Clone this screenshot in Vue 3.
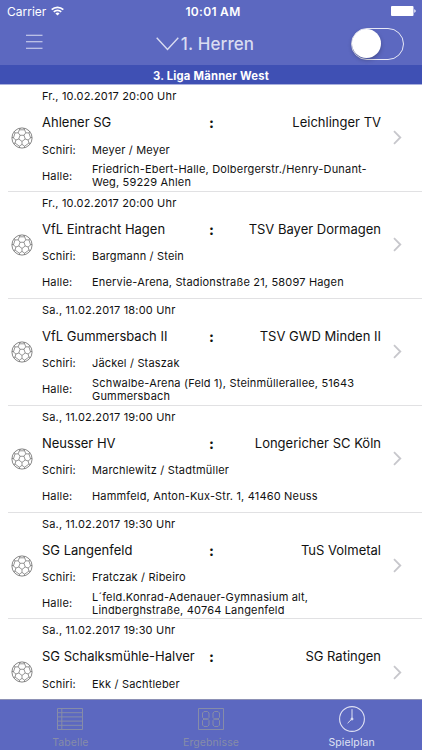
<script setup>
const games = [
  { date: 'Fr., 10.02.2017 20:00 Uhr', home: 'Ahlener SG', guest: 'Leichlinger TV', referees: 'Meyer / Meyer', hall: ['Friedrich-Ebert-Halle, Dolbergerstr./Henry-Dunant-', 'Weg, 59229 Ahlen'] },
  { date: 'Fr., 10.02.2017 20:00 Uhr', home: 'VfL Eintracht Hagen', guest: 'TSV Bayer Dormagen', referees: 'Bargmann / Stein', hall: ['Enervie-Arena, Stadionstraße 21, 58097 Hagen'] },
  { date: 'Sa., 11.02.2017 18:00 Uhr', home: 'VfL Gummersbach II', guest: 'TSV GWD Minden II', referees: 'Jäckel / Staszak', hall: ['Schwalbe-Arena (Feld 1), Steinmüllerallee, 51643', 'Gummersbach'] },
  { date: 'Sa., 11.02.2017 19:00 Uhr', home: 'Neusser HV', guest: 'Longericher SC Köln', referees: 'Marchlewitz / Stadtmüller', hall: ['Hammfeld, Anton-Kux-Str. 1, 41460 Neuss'] },
  { date: 'Sa., 11.02.2017 19:30 Uhr', home: 'SG Langenfeld', guest: 'TuS Volmetal', referees: 'Fratczak / Ribeiro', hall: ['L´feld.Konrad-Adenauer-Gymnasium alt,', 'Lindberghstraße, 40764 Langenfeld'] },
  { date: 'Sa., 11.02.2017 19:30 Uhr', home: 'SG Schalksmühle-Halver', guest: 'SG Ratingen', referees: 'Ekk / Sachtleber', hall: [] },
]
</script>

<template>
  <div class="screen">
    <header class="top">
      <div class="status">
        <div class="carrier">
          <span>Carrier</span>
          <svg width="13" height="10" viewBox="0 0 13 10" fill="none" stroke="#fff" stroke-width="1.7">
            <path d="M.7 3.7a8.2 8.2 0 0 1 11.6 0M2.8 5.9a5.2 5.2 0 0 1 7.4 0" />
            <path d="M6.5 9.6 4.4 7.5a3 3 0 0 1 4.2 0Z" fill="#fff" stroke="none" />
          </svg>
        </div>
        <span class="time">10:01 AM</span>
        <svg class="battery" width="25" height="10" viewBox="0 0 25 10" fill="#fff">
          <rect width="22.5" height="10" rx="1" />
          <path d="M23.3 3.2c1.8.4 1.8 3.2 0 3.6Z" />
        </svg>
      </div>
      <div class="nav">
        <svg class="menu" width="17" height="16" viewBox="0 0 17 16" stroke="#d9dcf1" stroke-width="1.1">
          <path d="M0 1.2h16.5M0 7.8h16.5M0 14.3h16.5" />
        </svg>
        <div class="title">
          <svg width="23" height="14" viewBox="0 0 23 14" fill="none" stroke="#d9dcf1" stroke-width="1.4">
            <path d="m.7.8 10.8 11.6L22.3.8" />
          </svg>
          <span>1. Herren</span>
        </div>
        <div class="toggle"><i class="knob"></i></div>
      </div>
    </header>
    <div class="league">3. Liga Männer West</div>
    <main class="list">
      <article v-for="(g, i) in games" :key="i" class="game">
        <svg class="ball" width="22" height="22" viewBox="-11 -11 22 22" fill="none" stroke="#6a6a6a" stroke-width=".7" stroke-linejoin="round">
          <circle r="10.1" stroke-width=".8" />
          <path d="M0 3.4-3.23 1.05-2-2.75H2L3.23 1.05Z" />
          <path d="M0 3.4v3M-3.23 1.05l-2.86.93M-2-2.75l-1.76-2.43M2-2.75l1.76-2.43M3.23 1.05l2.86.93" />
          <path d="M0 6.4-2.66 8.18-6.96 5.05-6.09 1.98-8.6 0-6.96-5.05-3.76-5.18-2.66-8.18H2.66L3.76-5.18 6.96-5.05 8.6 0 6.09 1.98 6.96 5.05 2.66 8.18Z" />
          <path d="M-2.66 8.18-2.3 9.8M2.66 8.18 2.3 9.8M-6.96 5.05l-1.5.5M6.96 5.05l1.5.5M-8.6 0-10-.8M8.6 0 10-.8M-6.96-5.05l-.9-1.3M6.96-5.05l.9-1.3M-2.66-8.18l1-1.7M2.66-8.18l-1-1.7" />
        </svg>
        <div class="body">
          <div class="date">{{ g.date }}</div>
          <div class="teams">
            <span class="home">{{ g.home }}</span>
            <b class="colon">:</b>
            <span class="guest">{{ g.guest }}</span>
          </div>
          <div class="info"><span>Schiri:</span><span>{{ g.referees }}</span></div>
          <div v-if="g.hall.length" class="info">
            <span>Halle:</span>
            <div><div v-for="line in g.hall" :key="line">{{ line }}</div></div>
          </div>
        </div>
        <svg class="chevron" width="9" height="15" viewBox="0 0 9 15" fill="none" stroke="#c7c7cc" stroke-width="1.8">
          <path d="m1 1.2 6.3 6.3L1 13.8" />
        </svg>
      </article>
    </main>
    <nav class="tabs">
      <div class="tab">
        <svg width="26" height="26" viewBox="0 0 26 26" fill="none" stroke="currentColor">
          <path d="M.5 2.5h25v21H.5ZM4.8 2.5v21M.5 6.7h25M.5 10.9h25M.5 15.1h25M.5 19.3h25" />
        </svg>
        <span>Tabelle</span>
      </div>
      <div class="tab">
        <svg width="26" height="26" viewBox="0 0 26 26" fill="none" stroke="currentColor">
          <path d="M.5 2.5h25v21H.5Z" />
          <path d="M6 5.5h3.5l1.5 1.5v4.5L9.5 13H6l-1.5-1.5V7ZM6 13h3.5l1.5 1.5V19l-1.5 1.5H6L4.5 19v-4.5ZM16.5 5.5H20L21.500 7v4.500L20 13h-3.500L15 11.500V7ZM16.500 13H20l1.500 1.500V19L20 20.500h-3.500L15 19v-4.500Z" />
        </svg>
        <span>Ergebnisse</span>
      </div>
      <div class="tab active">
        <svg width="26" height="26" viewBox="0 0 26 26" fill="none" stroke="currentColor">
          <circle cx="13" cy="13" r="12.4" stroke-width="1.1" />
          <path d="M13 3.2v9.6l-4.4 4.4" />
          <circle cx="13" cy="13" r="1" fill="currentColor" />
        </svg>
        <span>Spielplan</span>
      </div>
    </nav>
  </div>
</template>

<style>
body { background: #fff; }
</style>

<style scoped>
.screen {
  width: 422px;
  height: 750px;
  display: flex;
  flex-direction: column;
  overflow: hidden;
  background: #fff;
  color: #111;
  font-family: Inter, "Liberation Sans", sans-serif;
}
.top { height: 65px; flex: none; background: #5c68c0; color: #fff; }
.status {
  height: 22px;
  display: grid;
  grid-template-columns: 1fr auto 1fr;
  align-items: center;
  padding: 0 6px 0 8px;
  font-size: 12px;
}
.carrier { display: flex; align-items: center; gap: 5px; margin-left: -1px; letter-spacing: 0; }
.time { font-weight: 600; letter-spacing: .3px; padding-left: 2px; }
.battery { justify-self: end; }
.nav {
  height: 43px;
  display: grid;
  grid-template-columns: 1fr auto 1fr;
  align-items: center;
  padding: 0 18px 0 6px;
}
.menu { margin: -4px 0 0 20px; }
.title {
  display: flex;
  align-items: center;
  gap: 2px;
  color: #d9dcf1;
  font-size: 17px;
  font-weight: 500;
  letter-spacing: .1px;
  line-height: 22px;
}
.toggle {
  justify-self: end;
  box-sizing: border-box;
  width: 53px;
  height: 32px;
  border: 1.5px solid #e8e9f6;
  border-radius: 16px;
}
.knob {
  display: block;
  width: 29px;
  height: 29px;
  border-radius: 50%;
  background: #fff;
  box-shadow: 0 2px 4px rgba(0, 0, 0, .25);
}
.league {
  flex: none;
  height: 19px;
  line-height: 22px;
  background: #3f50b4;
  border-bottom: 1px solid #a9b0dd;
  color: #fff;
  text-align: center;
  font-size: 11.25px;
  font-weight: 700;
  letter-spacing: .22px;
}
.list { flex: 1; min-height: 0; overflow: hidden; }
.game {
  display: flex;
  align-items: center;
  box-sizing: border-box;
  height: 106.9px;
  margin-left: 8px;
  padding: 0 20px 0 3px;
  border-bottom: 1px solid #e1e1e3;
}
.ball, .chevron { flex: none; }
.body { width: 339px; margin: 0 12px 0 9px; align-self: stretch; }
.date { height: 23px; line-height: 23px; font-size: 11px; letter-spacing: .18px; }
.teams {
  height: 29px;
  line-height: 29px;
  display: grid;
  grid-template-columns: 1fr 10px 1fr;
  font-size: 13px;
  white-space: nowrap;
}
.colon { text-align: center; font-size: 14px; font-weight: 800; }
.guest { text-align: right; }
.info {
  display: grid;
  grid-template-columns: 50px 1fr;
  align-items: center;
  height: 26px;
  line-height: 13px;
  font-size: 11px;
  letter-spacing: .18px;
  white-space: nowrap;
}
.tabs {
  flex: none;
  box-sizing: border-box;
  height: 51px;
  display: grid;
  grid-template-columns: repeat(3, 1fr);
  background: #5c68c0;
  border-top: 1px solid #8d91b5;
}
.tab {
  display: flex;
  flex-direction: column;
  align-items: center;
  padding-top: 6px;
  color: #868ca8;
  font-size: 10.5px;
  line-height: 13px;
  gap: 4px;
  letter-spacing: .1px;
}
.tab.active { color: #dfe1f3; }
</style>
